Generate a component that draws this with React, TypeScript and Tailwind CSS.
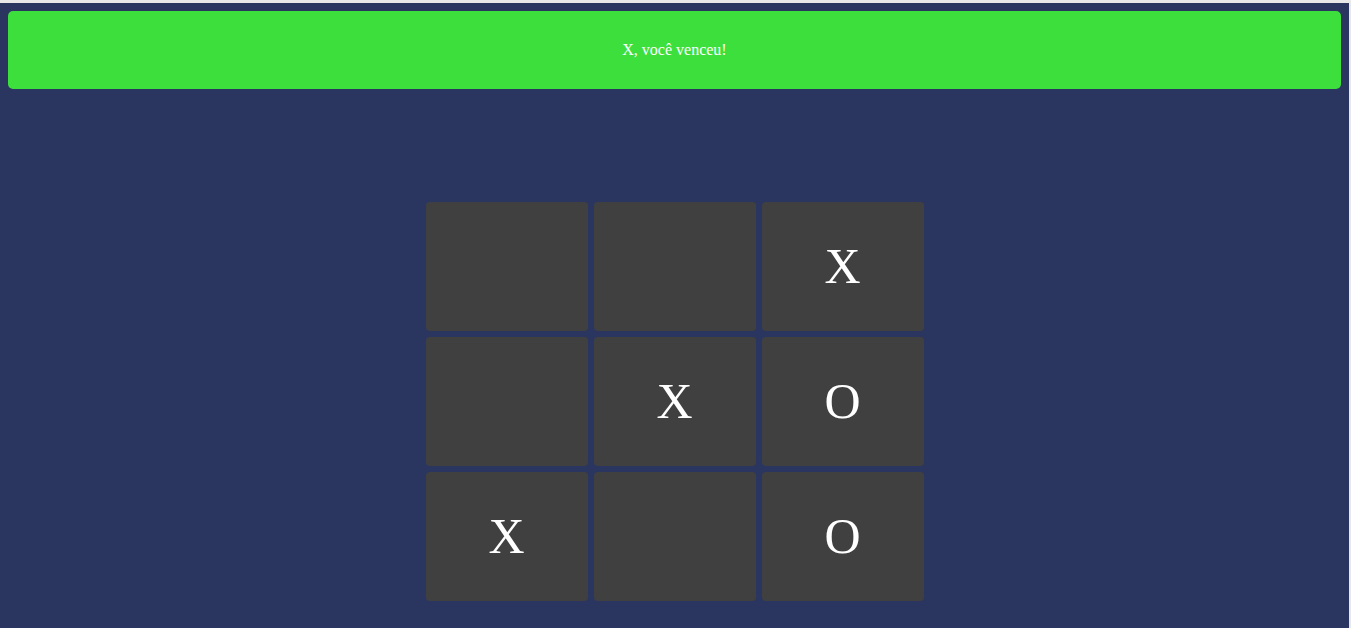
import React from 'react';

const board: string[] = ['', '', 'X', '', 'X', 'O', 'X', '', 'O'];

export default function App() {
  return (
    <div className="min-h-screen bg-[#e8e8e8] pt-[3px] pr-[2px]">
      <div className="h-[625px] bg-[#2a365f] p-2" style={{ fontFamily: '"Liberation Serif", "Times New Roman", serif' }}>
        {/* Winner banner */}
        <div className="flex h-[78px] items-center justify-center rounded-[5px] bg-[#3ddf3d] text-[16px] text-white">
          X, você venceu!
        </div>

        {/* Board */}
        <div className="mx-auto mt-[113px] grid w-[498px] grid-cols-3 gap-[6px]">
          {board.map((cell, i) => (
            <div
              key={i}
              className="flex h-[129px] items-center justify-center rounded-[4px] bg-[#404040] text-[50px] text-white"
            >
              {cell}
            </div>
          ))}
        </div>
      </div>
    </div>
  );
}
